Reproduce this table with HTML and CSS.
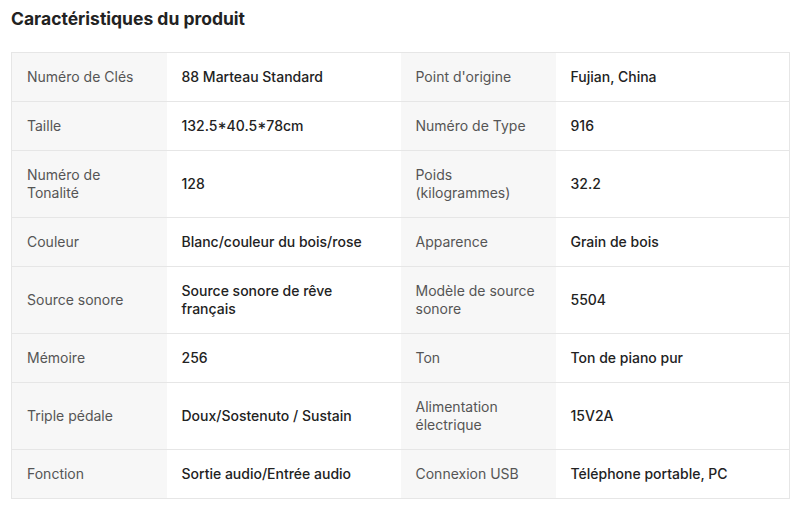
FILE: index.html
```html
<!DOCTYPE html>
<html lang="fr">
<head>
<meta charset="utf-8">
<link rel="stylesheet" href="styles.css">
</head>
<body>
<section class="specs">
  <h2 class="specs-title">Caractéristiques du produit</h2>
  <table class="specs-table">
    <colgroup>
      <col class="c-label"><col class="c-value"><col class="c-label"><col class="c-value">
    </colgroup>
    <tbody>
      <tr><th>Numéro de Clés</th><td>88 Marteau Standard</td><th>Point d'origine</th><td>Fujian, China</td></tr>
      <tr><th>Taille</th><td>132.5*40.5*78cm</td><th>Numéro de Type</th><td>916</td></tr>
      <tr><th>Numéro de Tonalité</th><td>128</td><th>Poids (kilogrammes)</th><td>32.2</td></tr>
      <tr><th>Couleur</th><td>Blanc/couleur du bois/rose</td><th>Apparence</th><td>Grain de bois</td></tr>
      <tr><th>Source sonore</th><td>Source sonore de rêve français</td><th>Modèle de source sonore</th><td>5504</td></tr>
      <tr><th>Mémoire</th><td>256</td><th>Ton</th><td>Ton de piano pur</td></tr>
      <tr><th>Triple pédale</th><td>Doux/Sostenuto / Sustain</td><th>Alimentation électrique</th><td>15V2A</td></tr>
      <tr><th>Fonction</th><td>Sortie audio/Entrée audio</td><th>Connexion USB</th><td>Téléphone portable, PC</td></tr>
    </tbody>
  </table>
</section>
</body>
</html>
```
FILE: styles.css
```css
html, body {
  margin: 0;
  padding: 0;
  background: #fff;
}
body {
  font-family: Inter, "Noto Sans", sans-serif;
  color: #222;
}
.specs {
  padding: 6px 11px 0 11px;
}
.specs-title {
  margin: 0 0 21px 0;
  font-size: 17.5px;
  line-height: 25px;
  font-weight: 700;
  color: #222;
}
.specs-table {
  width: 778px;
  border-collapse: collapse;
  table-layout: fixed;
  border: 1px solid #e6e6e6;
}
.c-label { width: 155px; }
.c-value { width: 234px; }
.specs-table th,
.specs-table td {
  border-top: 1px solid #e6e6e6;
  padding: 15px 15px;
  font-size: 14px;
  line-height: 18px;
  text-align: left;
  vertical-align: middle;
}
.specs-table th {
  background: #f7f7f7;
  color: #555;
  font-weight: 400;
}
.specs-table td {
  background: #fff;
  color: #222;
  font-weight: 500;
}
```
